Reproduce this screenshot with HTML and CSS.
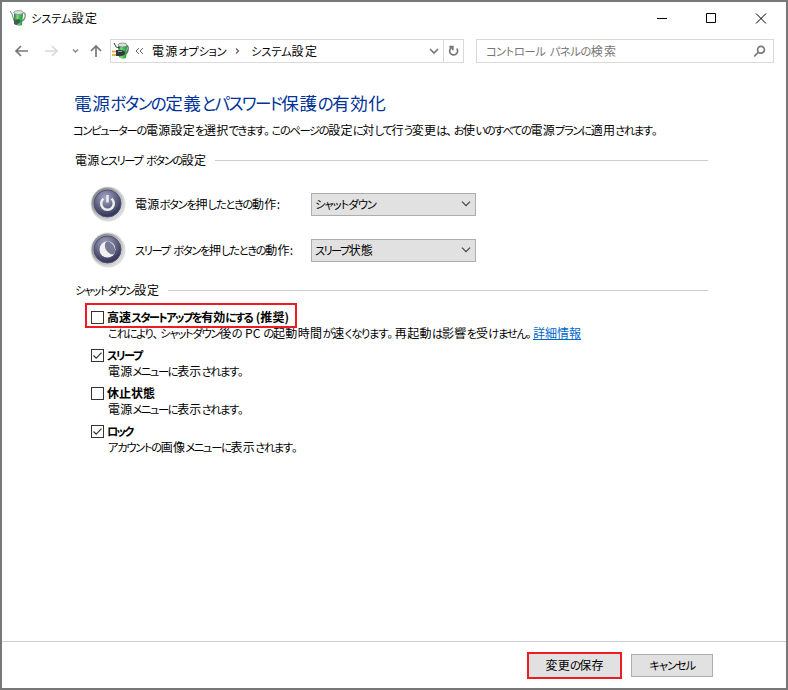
FILE: index.html
```html
<!DOCTYPE html>
<html lang="ja">
<head>
<meta charset="utf-8">
<title>システム設定</title>
<link rel="stylesheet" href="styles.css">
</head>
<body>
<svg width="0" height="0" class="defs" aria-hidden="true">
  <defs>
    <linearGradient id="green" x1="0" x2="1"><stop offset="0" stop-color="#237b32"/><stop offset=".35" stop-color="#75df75"/><stop offset="1" stop-color="#139332"/></linearGradient>
    <radialGradient id="orb" cx=".42" cy=".28" r=".75"><stop offset="0" stop-color="#a4a6c6"/><stop offset=".5" stop-color="#686989"/><stop offset="1" stop-color="#292b50"/></radialGradient>
    <linearGradient id="rim" x1="0" y1="0" x2="1" y2="1"><stop offset="0" stop-color="#777982"/><stop offset=".5" stop-color="#b4b4bb"/><stop offset="1" stop-color="#e5e5e8"/></linearGradient>
  </defs>
</svg>
<div class="window">
  <header class="titlebar">
    <svg class="app-icon" width="18" height="18" viewBox="0 0 18 18"><path d="M13 4q4-1 3 4-1 4-4 4" fill="none" stroke="#879199" stroke-width="1.4"/><path d="M5 4h9l-1 12q-4 2-8-1z" fill="url(#green)"/><ellipse cx="9.5" cy="3.5" rx="4.7" ry="2" fill="#d8e2d9" stroke="#78827b" stroke-width=".7"/><path d="M1 2l2 3 2 7" fill="none" stroke="#78858e"/><path d="M5 11l5-1 2 2-4 4-3-1z" fill="#4d565c"/></svg>
    <span class="t w66"><span class="k">システム</span>設定</span>
    <svg class="controls" width="112" height="14" viewBox="0 0 112 14" fill="none" stroke="#000"><path d="M1 7.5h10M50.500 2.500h9v9h-9zM100 2.500l10 10M110 2.500l-10 10"/></svg>
  </header>
  <nav class="navbar">
    <svg class="arrows" width="94" height="24" viewBox="0 0 94 24" fill="none"><path d="M14 12h12M19 7l-5 5 5 5" stroke="#777" stroke-width="1.7"/><path d="M43 12h12M50 7l5 5-5 5" stroke="#d8d8d8" stroke-width="1.700"/><path d="M71 10.500l2.500 2.500 2.500-2.500" stroke="#888" stroke-width="1.500"/><path d="M94 18V7M89 12l5-5 5 5" stroke="#777" stroke-width="1.700"/></svg>
    <div class="address">
      <svg class="plug" width="18" height="18" viewBox="0 0 18 18"><path d="M12 4q5-2 4 4-1 4-4 5" fill="none" stroke="#666e71" stroke-width="1.500"/><path d="M6 4h9l-1 12q-4 2-7-1z" fill="url(#green)"/><ellipse cx="10.500" cy="3" rx="4.500" ry="2" fill="#d8e2d9" stroke="#68716b" stroke-width=".7"/><path d="M2 1l2 4 4 1" fill="none" stroke="#3c4447"/><path d="M0 9.500h5M0 13h5" stroke="#d3a51c" stroke-width="1.700"/><path d="M4 8h4q5 0 5 3t-5 3H4z" fill="#343a3c"/><path d="M6 9.500h4" stroke="#9ba2a4"/></svg>
      <svg class="laquo" width="9" height="8" viewBox="0 0 9 8" fill="none" stroke="#666"><path d="M4 1L1 4l3 3M8 1L5 4l3 3"/></svg>
      <span class="t w73">電源<span class="k">オプション</span></span>
      <svg class="sep" width="6" height="8" viewBox="0 0 6 8" fill="none" stroke="#666" stroke-width="1.300"><path d="M1 1.500l2.500 2.500L1 6.500"/></svg>
      <span class="t w66"><span class="k">システム</span>設定</span>
      <svg class="drop" width="10" height="8" viewBox="0 0 10 8" fill="none" stroke="#777" stroke-width="1.700"><path d="M1 2l4 4 4-4"/></svg>
      <span class="refresh"><svg width="12" height="12" viewBox="0 0 12 12" fill="none" stroke="#777" stroke-width="1.700"><path d="M4 2.300A4 4 0 1 0 8.800 3.500M1.300 1.600h3.500v3.600"/></svg></span>
    </div>
    <div class="search"><span class="t w130"><span class="k">コントロール パネルの</span>検索</span>
      <svg width="13" height="13" viewBox="0 0 13 13" fill="none" stroke="#777" stroke-width="1.700"><circle cx="8" cy="4.700" r="3.400"/><path d="M5.500 7.200L1.200 11.500"/></svg>
    </div>
  </nav>
  <main>
    <h1><span class="t w312">電源<span class="k">ボタンの</span>定義<span class="k">とパスワード</span>保護<span class="k">の</span>有効化</span></h1>
    <p class="intro"><span class="t w584"><span class="k">コンピューターの</span>電源設定<span class="k">を</span>選択<span class="k">できます<span class="p">。</span>このページの</span>設定<span class="k">に</span>対<span class="k">して</span>行<span class="k">う</span>変更<span class="k">は<span class="p">、</span>お</span>使<span class="k">いのすべての</span>電源<span class="k">プランに</span>適用<span class="k">されます<span class="p">。</span></span></span></p>
    <h2><span class="t w131">電源<span class="k">とスリープ ボタンの</span>設定</span></h2>
    <div class="setting">
      <svg class="orb" width="36" height="36" viewBox="0 0 36 36"><circle cx="18" cy="18" r="17.500" fill="#ddd"/><circle cx="17.500" cy="17.500" r="16" fill="url(#rim)"/><circle cx="17.500" cy="17.500" r="13.500" fill="url(#orb)" stroke="#50526d"/><path d="M13.500 12.600a6.300 6.300 0 1 0 8 0" fill="none" stroke="#eee" stroke-width="2.500"/><path d="M17.500 9v7.500" stroke="#eee" stroke-width="2.500"/></svg>
      <span class="label"><span class="t w145">電源<span class="k">ボタンを</span>押<span class="k">したときの</span>動作:</span></span>
      <div class="select"><span class="t w60"><span class="k tight">シャットダウン</span></span><svg width="10" height="6" viewBox="0 0 10 6" fill="none" stroke="#444" stroke-width="1.200"><path d="M1 .7l4 4 4-4"/></svg></div>
    </div>
    <div class="setting">
      <svg class="orb" width="36" height="36" viewBox="0 0 36 36"><circle cx="18" cy="18" r="17.500" fill="#ddd"/><circle cx="17.500" cy="17.500" r="16" fill="url(#rim)"/><circle cx="17.500" cy="17.500" r="13.500" fill="url(#orb)" stroke="#50526d"/><circle cx="17.500" cy="17.500" r="8" fill="#f2f2f5"/><ellipse cx="20" cy="16" rx="4.300" ry="7" transform="rotate(-32 20 16)" fill="#777997"/></svg>
      <span class="label"><span class="t w158"><span class="k">スリープ ボタンを</span>押<span class="k">したときの</span>動作:</span></span>
      <div class="select"><span class="t w57"><span class="k">スリープ</span>状態</span><svg width="10" height="6" viewBox="0 0 10 6" fill="none" stroke="#444" stroke-width="1.200"><path d="M1 .7l4 4 4-4"/></svg></div>
    </div>
    <h2 class="shutdown"><span class="t w84"><span class="k tight">シャットダウン</span>設定</span></h2>
    <section class="options">
      <div class="option marked">
        <div class="name"><span class="check"></span><span class="t w182">高速<span class="k">スタートアップを</span>有効<span class="k">にする </span>(推奨)</span></div>
        <div class="desc"><span class="t w425"><span class="k">これにより<span class="p">、</span>シャットダウン</span>後<span class="k">の </span>PC <span class="k">の</span>起動時間<span class="k">が</span>速<span class="k">くなります<span class="p">。</span></span>再起動<span class="k">は</span>影響<span class="k">を</span>受<span class="k">けません<span class="p">。</span></span></span><a class="t w48" href="#">詳細情報</a></div>
      </div>
      <div class="option">
        <div class="name"><span class="check"><svg width="11" height="11" viewBox="0 0 11 11"><path d="M1.500 5.500l2.700 2.700 5.300-5.500" fill="none" stroke="#333" stroke-width="1.200"/></svg></span><span class="t w34"><span class="k">スリープ</span></span></div>
        <div class="desc"><span class="t w137">電源<span class="k">メニューに</span>表示<span class="k">されます<span class="p">。</span></span></span></div>
      </div>
      <div class="option">
        <div class="name"><span class="check"></span><span class="t w48">休止状態</span></div>
        <div class="desc"><span class="t w137">電源<span class="k">メニューに</span>表示<span class="k">されます<span class="p">。</span></span></span></div>
      </div>
      <div class="option">
        <div class="name"><span class="check"><svg width="11" height="11" viewBox="0 0 11 11"><path d="M1.500 5.500l2.700 2.700 5.300-5.500" fill="none" stroke="#333" stroke-width="1.200"/></svg></span><span class="t w25"><span class="k tight">ロック</span></span></div>
        <div class="desc"><span class="t w191"><span class="k">アカウントの</span>画像<span class="k">メニューに</span>表示<span class="k">されます<span class="p">。</span></span></span></div>
      </div>
    </section>
  </main>
  <footer>
    <button class="save"><span class="t w58">変更<span class="k">の</span>保存</span></button>
    <button><span class="t w45"><span class="k">キャンセル</span></span></button>
  </footer>
</div>
</body>
</html>
```

FILE: styles.css
```css
*, *::before, *::after { box-sizing: border-box; }
body {
  margin: 0;
  font: 12px/16px "Noto Sans CJK JP", sans-serif;
  font-feature-settings: "palt";
  color: #000;
}
svg { display: block; flex: none; }
.defs { position: absolute; }
.window {
  width: 788px;
  height: 690px;
  border: 2px solid #777;
  background: #fff;
  display: flex;
  flex-direction: column;
}

/* Fixed-measure lines with condensed kana */
.t {
  display: block;
  flex: none;
  white-space: nowrap;
  text-align: justify;
  text-align-last: justify;
}
.k { font-size: 0.94em; letter-spacing: -1.6px; word-spacing: 2.5px; }
.k.tight { letter-spacing: -2px; }
.p { letter-spacing: 1.5px; }
.w25 { width: 25px; }
.w34 { width: 34px; }
.w45 { width: 45px; }
.w48 { width: 48px; }
.w57 { width: 57px; }
.w58 { width: 58px; }
.w60 { width: 60px; }
.w66 { width: 66px; }
.w73 { width: 73px; }
.w84 { width: 84px; }
.w130 { width: 130px; }
.w131 { width: 131px; }
.w137 { width: 137px; }
.w145 { width: 145px; }
.w158 { width: 158px; }
.w182 { width: 182px; }
.w191 { width: 191px; }
.w312 { width: 312px; }
.w425 { width: 425px; }
.w584 { width: 586px; }

.titlebar { display: flex; align-items: center; height: 31px; padding: 0 18px 0 7px; }
.app-icon { margin-right: 4px; }
.controls { margin-left: auto; }
.navbar { display: flex; height: 24px; margin-top: 6px; padding-right: 12px; }
.arrows { margin-right: 14px; overflow: visible; }
.address, .search { display: flex; align-items: center; border: 1px solid #d9d9d9; height: 24px; }
.address { width: 354px; }
.plug { margin-left: 1px; }
.laquo { margin: 0 8px 0 5px; }
.sep { margin: 0 10px; }
.drop { margin-left: auto; }
.refresh { display: flex; align-items: center; justify-content: center; width: 20px; height: 22px; margin-left: 4px; border-left: 1px solid #d9d9d9; }
.search { width: 298px; margin-left: 12px; padding: 0 7px 0 9px; justify-content: space-between; color: #767676; }

main { flex: 1; padding: 28px 78px 0 72px; }
h1, h2, p { margin: 0; font-weight: 400; }
h1 { font-size: 17.6px; line-height: 24px; color: #003399; }
h1 .k { letter-spacing: -2.1px; }
.intro { margin-top: 7px; }
.intro .t { margin-left: -1px; }
h2 { display: flex; align-items: center; gap: 9px; margin-top: 14px; padding-left: 1px; font-size: 12px; }
h2::after { content: ""; flex: 1; height: 1px; background: #ccc; }
.setting { display: flex; align-items: center; height: 46px; padding-left: 16px; }
h2 + .setting { margin-top: 13px; }
.label { width: 176px; margin-left: 9px; }
.select { display: flex; align-items: center; justify-content: space-between; width: 165px; height: 23px; padding: 0 4px 0 3px; border: 1px solid #adadad; background: #e1e1e1; }
.shutdown { margin-top: 9px; }
.options { margin-top: 11px; padding-left: 17px; }
.option { position: relative; height: 38px; }
.name { display: flex; align-items: center; height: 16px; gap: 3px; font-weight: 700; }
.check { width: 13px; height: 13px; border: 1px solid #333; background: #fff; }
.desc { display: flex; padding-left: 17px; }
.marked::after { content: ""; position: absolute; left: -6px; top: -6px; width: 212px; height: 25px; border: 2px solid #ed1c24; }
a { color: #0066cc; text-decoration: underline; }

footer { display: flex; align-items: center; justify-content: flex-end; gap: 9px; height: 47px; padding-right: 73px; border-top: 1px solid #ccc; }
button { display: flex; align-items: center; justify-content: center; width: 82px; height: 23px; padding: 0; border: 1px solid #adadad; background: #e1e1e1; color: #000; font: inherit; font-feature-settings: inherit; }
.save { width: 95px; height: 27px; border: 2px solid #ed1c24; }
```
